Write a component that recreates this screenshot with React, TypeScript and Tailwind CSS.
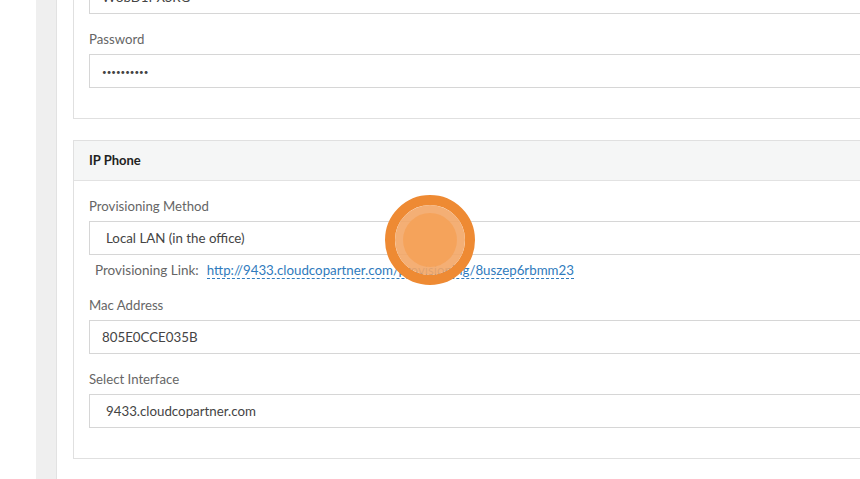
import React from 'react';

const font = { fontFamily: 'Lato, "Open Sans", sans-serif' };

function Field({ label, children }: { label: string; children: React.ReactNode }) {
  return (
    <div className="mb-[15px]">
      <div className="h-[20px] mb-[5px] leading-[20px] text-[13.2px] text-[#666]">{label}</div>
      {children}
    </div>
  );
}

function Input({ value, select = false, small = false }: { value: string; select?: boolean; small?: boolean }) {
  return (
    <div
      className={`h-[34px] w-full border border-[#d6d6d6] bg-white flex items-center pt-[2px] text-[#444] ${
        select ? 'pl-[16px]' : 'pl-[12px]'
      } ${small ? 'text-[8px]' : 'text-[13.3px]'}`}
    >
      {value}
    </div>
  );
}

export default function App() {
  return (
    <div className="relative flex h-[479px] w-[860px] overflow-hidden bg-white" style={font}>
      <div className="w-[36px] shrink-0 bg-white" />
      <div className="w-[21px] shrink-0 bg-[#efefef] border-r border-[#e2e2e2]" />
      <div className="flex-1 pl-[16px]">
        <div className="w-[820px] mt-[-61px] border border-[#e0e0e0] bg-white px-[15px] pt-[15px] pb-[15px]">
          <Field label="Username">
            <Input value="W8bD1PXSRG" />
          </Field>
          <Field label="Password">
            <Input value="••••••••••" small />
          </Field>
        </div>

        <div className="w-[820px] mt-[21px] border border-[#e0e0e0] bg-white">
          <div className="h-[40px] flex items-center px-[15px] bg-[#f5f6f6] border-b border-[#e2e2e2] text-[13px] font-bold text-[#222]">
            IP Phone
          </div>
          <div className="px-[15px] pt-[15px] pb-[15px]">
            <div className="mb-[15px]">
              <div className="h-[20px] mb-[5px] leading-[20px] text-[13.2px] text-[#666]">Provisioning Method</div>
              <Input value="Local LAN (in the office)" select />
              <div className="mt-[5px] h-[20px] flex items-center pl-[6px] text-[13.5px] text-[#666]">
                <span>Provisioning Link:</span>
                <a className="ml-[8px] text-[13.3px] text-[#2f7bbd] border-b border-dashed border-[#2f7bbd] leading-[16px]">
                  http://9433.cloudcopartner.com/provisioning/8uszep6rbmm23
                </a>
              </div>
            </div>
            <Field label="Mac Address">
              <Input value="805E0CCE035B" />
            </Field>
            <Field label="Select Interface">
              <Input value="9433.cloudcopartner.com" select />
            </Field>
          </div>
        </div>
      </div>

      <div className="absolute left-[385px] top-[195px] w-[90px] h-[90px] rounded-full border-[10px] border-[#ee8a33] flex items-center justify-center">
        <div className="w-[70px] h-[70px] rounded-full bg-[#f3a666]/90 flex items-center justify-center">
          <div className="w-[54px] h-[54px] rounded-full bg-[#f5a259]/90" />
        </div>
      </div>
    </div>
  );
}
